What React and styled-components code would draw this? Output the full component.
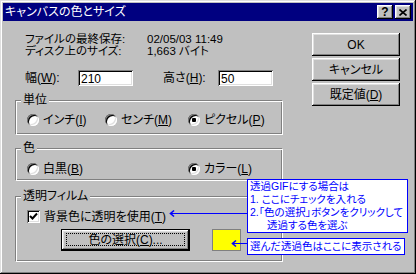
import React from "react";
import styled, { createGlobalStyle, css } from "styled-components";

const GlobalStyle = createGlobalStyle`
  html, body { margin: 0; padding: 0; background: #c0c0c0; }
  body {
    font-family: "Liberation Sans", "Noto Sans CJK JP", sans-serif;
    font-size: 12px;
    font-feature-settings: "palt";
    color: #000;
  }
  * { box-sizing: border-box; }
`;

const raised = css`
  box-shadow: inset -1px -1px 0 #000, inset 1px 1px 0 #fff,
    inset -2px -2px 0 #808080, inset 2px 2px 0 #dfdfdf;
`;

const sunken = css`
  box-shadow: inset 1px 1px 0 #808080, inset -1px -1px 0 #fff,
    inset 2px 2px 0 #000, inset -2px -2px 0 #dfdfdf;
`;

const Window = styled.div`
  position: relative;
  width: 416px;
  height: 274px;
  padding: 3px;
  background: #c0c0c0;
  box-shadow: inset -1px -1px 0 #000, inset 1px 1px 0 #dfdfdf,
    inset -2px -2px 0 #808080, inset 2px 2px 0 #fff;
`;

const TitleBar = styled.div`
  height: 18px;
  background: #000080;
  color: #fff;
  display: flex;
  align-items: center;
  justify-content: space-between;
  padding: 0 2px 0 2px;
`;

const Title = styled.span`
  font-size: 12px;
  line-height: 18px;
`;

const CaptionButtons = styled.div`
  display: flex;
  gap: 2px;
`;

const CaptionButton = styled.div`
  width: 16px;
  height: 14px;
  background: #c0c0c0;
  ${raised};
  display: flex;
  align-items: center;
  justify-content: center;
  color: #000;
  font: bold 12px/14px "Liberation Sans", sans-serif;
`;

const Body = styled.div`
  display: flex;
  padding: 12px 0 0 12px;
`;

const LeftColumn = styled.div`
  width: 268px;
  display: flex;
  flex-direction: column;
`;

const RightColumn = styled.div`
  margin-left: 29px;
  display: flex;
  flex-direction: column;
  gap: 2px;
`;

const InfoGrid = styled.div`
  display: grid;
  grid-template-columns: 122px auto;
  padding-left: 10px;
  font-size: 11.5px;
  line-height: 12px;
`;

const SizeRow = styled.div`
  display: flex;
  align-items: center;
  height: 16px;
  margin-top: 13px;
  padding-left: 10px;
`;

const FieldLabel = styled.label`
  width: ${(p) => p.$w}px;
  margin-left: ${(p) => p.$ml || 0}px;
  line-height: 12px;
`;

const TextInput = styled.input`
  width: 55px;
  height: 16px;
  border: none;
  outline: none;
  background: #fff;
  ${sunken};
  padding: 1px 0 0 3px;
  font: inherit;
  font-size: 12px;
  line-height: 12px;
  color: #000;
`;

const Group = styled.fieldset`
  margin: ${(p) => p.$mt}px 0 0 0;
  padding: 0;
  min-width: 0;
  border: 1px solid;
  border-color: #808080 #fff #fff #808080;
  box-shadow: inset 1px 1px 0 #fff, inset -1px -1px 0 #808080;
`;

const Legend = styled.legend`
  margin-left: 5px;
  padding: 0 2px;
  line-height: 12px;
  background: #c0c0c0;
`;

const GroupBody = styled.div`
  padding: ${(p) => p.$pt}px 0 ${(p) => p.$pb}px 11px;
`;

const RadioGrid = styled.div`
  display: grid;
  grid-template-columns: 78px 83px auto;
  height: 13px;
  align-items: center;
`;

const Choice = styled.label`
  display: flex;
  align-items: center;
  gap: 4px;
  line-height: 12px;
  grid-column: ${(p) => p.$col || "auto"};
  white-space: nowrap;
`;

const RadioDot = styled.span`
  position: relative;
  width: 12px;
  height: 12px;
  border-radius: 50%;
  background: #fff;
  box-shadow: inset 1px 1px 0 #808080, inset -1px -1px 0 #fff,
    inset 2px 2px 0 #000, inset -2px -2px 0 #dfdfdf;
  flex: none;
  ${(p) =>
    p.$on &&
    css`
      &::after {
        content: "";
        position: absolute;
        left: 4px;
        top: 4px;
        width: 4px;
        height: 4px;
        border-radius: 1px;
        background: #000;
      }
    `}
`;

const CheckBox = styled.span`
  width: 13px;
  height: 13px;
  background: #fff;
  ${sunken};
  flex: none;
  display: flex;
  align-items: center;
  justify-content: center;
`;

const ButtonRow = styled.div`
  display: flex;
  align-items: center;
  margin: 6px 0 0 34px;
`;

const Button = styled.button`
  width: ${(p) => p.$w}px;
  height: ${(p) => p.$h}px;
  background: #c0c0c0;
  border: none;
  padding: 0;
  font: inherit;
  font-size: 12px;
  line-height: 12px;
  color: #000;
  display: flex;
  align-items: center;
  justify-content: center;
  ${raised};
  ${(p) =>
    p.$default &&
    css`
      border: 1px solid #000;
      padding: 3px 4px 4px 4px;
    `}
`;

const FocusRing = styled.span`
  flex: 1;
  align-self: stretch;
  border: 1px dotted #000;
  display: flex;
  align-items: center;
  justify-content: center;
`;

const Swatch = styled.div`
  width: 29px;
  height: 22px;
  margin-left: 22px;
  background: #ffff00;
  border: 1px solid #808080;
`;

const Callout = styled.div`
  position: absolute;
  left: ${(p) => p.$x}px;
  top: ${(p) => p.$y}px;
  width: ${(p) => p.$w}px;
  height: ${(p) => p.$h}px;
  background: #fff;
  border: 1px solid #0000ff;
  color: #0000ff;
  font-size: 10.5px;
  line-height: ${(p) => p.$lh}px;
  padding: 0 2px;
  white-space: nowrap;
`;

const CalloutLine = styled.div`
  padding-left: ${(p) => p.$indent || 0}px;
`;

const Arrow = styled.svg`
  position: absolute;
  left: ${(p) => p.$x}px;
  top: ${(p) => p.$y}px;
  overflow: visible;
`;

const U = styled.u`
  text-underline-offset: 1px;
`;

export default function App() {
  return (
    <>
      <GlobalStyle />
      <Window>
        <TitleBar>
          <Title>キャンバスの色とサイズ</Title>
          <CaptionButtons>
            <CaptionButton>?</CaptionButton>
            <CaptionButton>
              <svg width="8" height="7" viewBox="0 0 8 7">
                <path d="M0.5 0.5 L7.5 6.5 M7.5 0.5 L0.5 6.5" stroke="#000" strokeWidth="1.6" />
              </svg>
            </CaptionButton>
          </CaptionButtons>
        </TitleBar>

        <Body>
          <LeftColumn>
            <InfoGrid>
              <span>ファイルの最終保存:</span>
              <span>02/05/03 11:49</span>
              <span>ディスク上のサイズ:</span>
              <span>1,663 バイト</span>
            </InfoGrid>

            <SizeRow>
              <FieldLabel $w={53}>幅(<U>W</U>):</FieldLabel>
              <TextInput readOnly defaultValue="210" />
              <FieldLabel $w={55} $ml={30}>高さ(<U>H</U>):</FieldLabel>
              <TextInput readOnly defaultValue="50" />
            </SizeRow>

            <Group $mt={8}>
              <Legend>単位</Legend>
              <GroupBody $pt={7} $pb={8}>
                <RadioGrid>
                  <Choice><RadioDot /><span>インチ(<U>I</U>)</span></Choice>
                  <Choice><RadioDot /><span>センチ(<U>M</U>)</span></Choice>
                  <Choice><RadioDot $on /><span>ピクセル(<U>P</U>)</span></Choice>
                </RadioGrid>
              </GroupBody>
            </Group>

            <Group $mt={7}>
              <Legend>色</Legend>
              <GroupBody $pt={8} $pb={5}>
                <RadioGrid>
                  <Choice $col="1"><RadioDot /><span>白黒(<U>B</U>)</span></Choice>
                  <Choice $col="3"><RadioDot $on /><span>カラー(<U>L</U>)</span></Choice>
                </RadioGrid>
              </GroupBody>
            </Group>

            <Group $mt={9}>
              <Legend>透明フィルム</Legend>
              <GroupBody $pt={8} $pb={10}>
                <Choice>
                  <CheckBox>
                    <svg width="9" height="9" viewBox="0 0 9 9">
                      <path d="M1 4 L3.5 6.5 L8 1.5" fill="none" stroke="#000" strokeWidth="2" />
                    </svg>
                  </CheckBox>
                  <span>背景色に透明を使用(<U>T</U>)</span>
                </Choice>
                <ButtonRow>
                  <Button $w={129} $h={22} $default>
                    <FocusRing><span>色の選択(<U>C</U>)...</span></FocusRing>
                  </Button>
                  <Swatch />
                </ButtonRow>
              </GroupBody>
            </Group>
          </LeftColumn>

          <RightColumn>
            <Button $w={88} $h={23}>OK</Button>
            <Button $w={88} $h={23}>キャンセル</Button>
            <Button $w={88} $h={23}><span>既定値(<U>D</U>)</span></Button>
          </RightColumn>
        </Body>

        <Callout $x={247} $y={179} $w={161} $h={54} $lh={13}>
          <CalloutLine>透過GIFにする場合は</CalloutLine>
          <CalloutLine>1. ここにチェックを入れる</CalloutLine>
          <CalloutLine>2.「色の選択」ボタンをクリックして</CalloutLine>
          <CalloutLine $indent={17}>透過する色を選ぶ</CalloutLine>
        </Callout>
        <Arrow $x={169} $y={209} width="78" height="10">
          <path d="M1 4.5 H78" stroke="#0000ff" strokeWidth="1" />
          <path d="M5 1.5 L1.5 4.5 L5 7.5" fill="none" stroke="#0000ff" strokeWidth="1.6" />
        </Arrow>

        <Callout $x={247} $y={238} $w={158} $h={17} $lh={15}>
          <CalloutLine>選んだ透過色はここに表示される</CalloutLine>
        </Callout>
        <Arrow $x={231} $y={239} width="16" height="10">
          <path d="M1 4.5 H16" stroke="#0000ff" strokeWidth="1" />
          <path d="M5 1.5 L1.5 4.5 L5 7.5" fill="none" stroke="#0000ff" strokeWidth="1.6" />
        </Arrow>
      </Window>
    </>
  );
}
